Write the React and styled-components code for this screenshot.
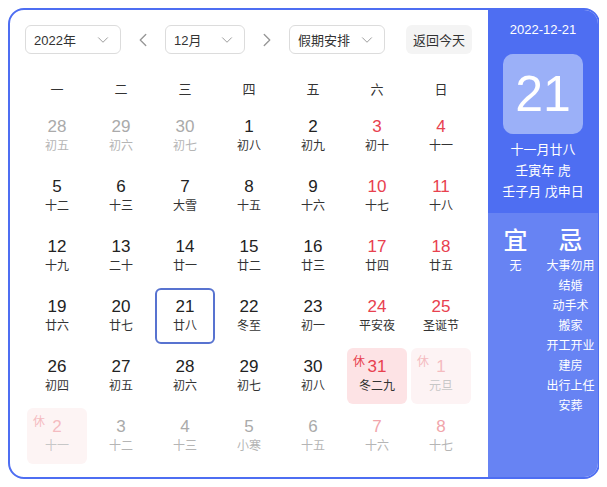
import styled, { createGlobalStyle } from "styled-components";
import { ChevronDown, ChevronLeft, ChevronRight } from "lucide-react";

const GlobalStyle = createGlobalStyle`
  body {
    margin: 8px;
    font-family: "Liberation Sans", "Noto Sans CJK SC", sans-serif;
    background: #fff;
  }
`;

const Frame = styled.div`
  width: 592px;
  height: 471px;
  box-sizing: border-box;
  border: 2px solid #4e6ef2;
  border-radius: 16px;
  overflow: hidden;
  display: flex;
`;

const Main = styled.div`
  flex: 1;
  padding: 15px 0 0 15px;
`;

const Toolbar = styled.div`
  display: flex;
  align-items: center;
  height: 29px;
`;

const Select = styled.div`
  width: ${(p) => p.w}px;
  height: 29px;
  box-sizing: border-box;
  border: 1px solid #dcdcdc;
  border-radius: 6px;
  display: flex;
  align-items: center;
  justify-content: space-between;
  padding: 0 8px 0 8px;
  font-size: 13px;
  color: #333;
`;

const Arrow = styled.div`
  width: 44px;
  display: flex;
  justify-content: center;
  color: #999;
`;

const TodayBtn = styled.div`
  height: 29px;
  padding: 0 7px;
  border-radius: 6px;
  background: #f4f4f4;
  font-size: 13px;
  color: #333;
  display: flex;
  align-items: center;
  margin-left: 21px;
`;

const Week = styled.div`
  display: grid;
  grid-template-columns: repeat(7, 64px);
  height: 40px;
  margin-top: 14px;
  align-items: center;
  text-align: center;
  font-size: 13px;
  color: #333;
`;

const Grid = styled.div`
  display: grid;
  grid-template-columns: repeat(7, 64px);
  grid-auto-rows: 56px;
  row-gap: 4px;
`;

const Cell = styled.div`
  position: relative;
  margin: 0 2px;
  box-sizing: border-box;
  border-radius: 6px;
  border: 2px solid ${(p) => (p.today ? "#5873d0" : "transparent")};
  background: ${(p) => (p.rest ? (p.other ? "#fdf0f1" : "#fde3e5") : "transparent")};
  display: flex;
  flex-direction: column;
  align-items: center;
  justify-content: center;
  opacity: ${(p) => (p.other && p.rest ? 0.75 : 1)};
`;

const DayNum = styled.div`
  font-size: 17px;
  line-height: 20px;
  color: ${(p) => p.color};
`;

const Lunar = styled.div`
  font-size: 12px;
  line-height: 17px;
  margin-top: 1px;
  color: ${(p) => p.color};
`;

const Rest = styled.span`
  position: absolute;
  left: 4px;
  top: 2px;
  font-size: 12px;
  color: ${(p) => (p.other ? "#f1a5ab" : "#e8414f")};
`;

const Side = styled.div`
  width: 110px;
  display: flex;
  flex-direction: column;
  color: #fff;
`;

const SideTop = styled.div`
  background: #4e6ef2;
  height: 203px;
  display: flex;
  flex-direction: column;
  align-items: center;
  padding-top: 11px;
  box-sizing: border-box;
`;

const DateText = styled.div`
  font-size: 13px;
  line-height: 18px;
`;

const BigDay = styled.div`
  width: 80px;
  height: 80px;
  margin-top: 15px;
  border-radius: 10px;
  background: #9bb0f8;
  font-size: 50px;
  display: flex;
  align-items: center;
  justify-content: center;
`;

const LunarInfo = styled.div`
  margin-top: 5px;
  font-size: 13px;
  line-height: 21px;
  text-align: center;
`;

const SideBottom = styled.div`
  flex: 1;
  background: #6783f3;
  display: grid;
  grid-template-columns: 1fr 1fr;
  align-content: start;
  padding-top: 12px;
`;

const Col = styled.div`
  display: flex;
  flex-direction: column;
  align-items: center;
`;

const Title = styled.div`
  font-size: 24px;
  line-height: 31px;
  font-weight: 500;
`;

const Item = styled.div`
  font-size: 12px;
  line-height: 20px;
`;

const rows = [
  [[28, "初五", 1], [29, "初六", 1], [30, "初七", 1], [1, "初八"], [2, "初九"], [3, "初十"], [4, "十一"]],
  [[5, "十二"], [6, "十三"], [7, "大雪"], [8, "十五"], [9, "十六"], [10, "十七"], [11, "十八"]],
  [[12, "十九"], [13, "二十"], [14, "廿一"], [15, "廿二"], [16, "廿三"], [17, "廿四"], [18, "廿五"]],
  [[19, "廿六"], [20, "廿七"], [21, "廿八"], [22, "冬至"], [23, "初一"], [24, "平安夜"], [25, "圣诞节"]],
  [[26, "初四"], [27, "初五"], [28, "初六"], [29, "初七"], [30, "初八"], [31, "冬二九", 0, 1], [1, "元旦", 1, 1]],
  [[2, "十一", 1, 1], [3, "十二", 1], [4, "十三", 1], [5, "小寒", 1], [6, "十五", 1], [7, "十六", 1], [8, "十七", 1]],
];

const ji = ["大事勿用", "结婚", "动手术", "搬家", "开工开业", "建房", "出行上任", "安葬"];

function Day({ d, lunar, other, rest, weekend, today }) {
  let numColor = "#222";
  let lunarColor = "#333";
  if (other) {
    numColor = weekend || rest ? "#f1a5ab" : "#aaa";
    lunarColor = "#b5b5b5";
  } else if (weekend || rest) {
    numColor = "#e8414f";
  }
  return (
    <Cell today={today} rest={rest} other={other}>
      {rest && <Rest other={other}>休</Rest>}
      <DayNum color={numColor}>{d}</DayNum>
      <Lunar color={lunarColor}>{lunar}</Lunar>
    </Cell>
  );
}

export default function App() {
  return (
    <>
      <GlobalStyle />
      <Frame>
        <Main>
          <Toolbar>
            <Select w={96}>
              2022年
              <ChevronDown size={18} color="#999" strokeWidth={1.3} />
            </Select>
            <Arrow>
              <ChevronLeft size={22} strokeWidth={1.5} />
            </Arrow>
            <Select w={80}>
              12月
              <ChevronDown size={18} color="#999" strokeWidth={1.3} />
            </Select>
            <Arrow>
              <ChevronRight size={22} strokeWidth={1.5} />
            </Arrow>
            <Select w={96}>
              假期安排
              <ChevronDown size={18} color="#999" strokeWidth={1.3} />
            </Select>
            <TodayBtn>返回今天</TodayBtn>
          </Toolbar>
          <Week>
            {["一", "二", "三", "四", "五", "六", "日"].map((w) => (
              <span key={w}>{w}</span>
            ))}
          </Week>
          <Grid>
            {rows.map((row, ri) =>
              row.map(([d, lunar, other, rest], ci) => (
                <Day
                  key={`${ri}-${ci}`}
                  d={d}
                  lunar={lunar}
                  other={!!other}
                  rest={!!rest}
                  weekend={ci >= 5}
                  today={ri === 3 && ci === 2}
                />
              ))
            )}
          </Grid>
        </Main>
        <Side>
          <SideTop>
            <DateText>2022-12-21</DateText>
            <BigDay>21</BigDay>
            <LunarInfo>
              <div>十一月廿八</div>
              <div>壬寅年 虎</div>
              <div>壬子月 戊申日</div>
            </LunarInfo>
          </SideTop>
          <SideBottom>
            <Col>
              <Title>宜</Title>
              <Item>无</Item>
            </Col>
            <Col>
              <Title>忌</Title>
              {ji.map((t) => (
                <Item key={t}>{t}</Item>
              ))}
            </Col>
          </SideBottom>
        </Side>
      </Frame>
    </>
  );
}
